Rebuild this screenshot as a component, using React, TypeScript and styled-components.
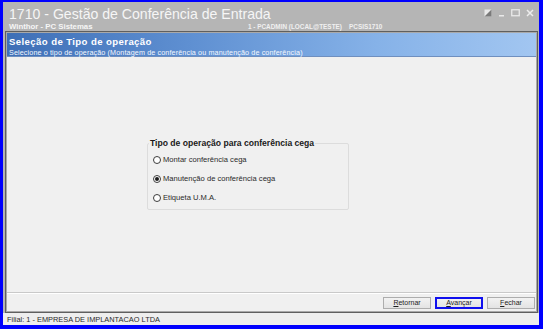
import React from 'react';
import styled, { createGlobalStyle } from 'styled-components';

const GlobalStyle = createGlobalStyle`
  html, body {
    margin: 0;
    padding: 0;
    background: #ffffff;
  }
  body {
    font-family: "Liberation Sans", Arial, sans-serif;
  }
`;

const Frame = styled.div`
  width: 543px;
  height: 329px;
  box-sizing: border-box;
  border-style: solid;
  border-color: #0000fe;
  border-width: 2px 4px 4px 3px;
  background: #b5b5b5;
  display: flex;
  flex-direction: column;
  overflow: hidden;
`;

const TitleBar = styled.div`
  height: 29px;
  flex: none;
  display: flex;
  justify-content: space-between;
  padding: 0 5px 0 6px;
  color: #f6f6f6;
`;

const TitleText = styled.div`
  display: flex;
  flex-direction: column;
`;

const AppTitle = styled.div`
  font-size: 14.1px;
  line-height: 17px;
  margin-top: 4px;
`;

const SubLine = styled.div`
  display: flex;
  align-items: baseline;
  font-size: 7px;
  line-height: 8px;
`;

const Company = styled.span`
  font-weight: bold;
  font-size: 7.8px;
  width: 239px;
`;

const Session = styled.span`
  font-weight: bold;
  font-size: 6.4px;
  color: #f0f0f0;
  white-space: pre;
`;

const Controls = styled.div`
  display: flex;
  gap: 6px;
  padding-top: 7px;
  align-items: flex-start;
`;

const Panel = styled.div`
  flex: 1;
  margin: 0 1px 0 2px;
  display: flex;
  flex-direction: column;
  border: 1px solid #5f5f5f;
  box-shadow: inset 0 0 0 1px #a9a9a9;
  padding: 1px;
  background: #f0f0f0;
`;

const Header = styled.div`
  height: 24px;
  flex: none;
  padding: 4px 0 0 2px;
  box-sizing: border-box;
  color: #ffffff;
  background: linear-gradient(to right, #3e6fb6 0%, #5f90d2 35%, #86b2e8 70%, #a2c6f1 100%);
  border-bottom: 1px solid #6f8fbf;
`;

const HeaderTitle = styled.div`
  font-weight: bold;
  font-size: 9.6px;
  line-height: 10px;
  letter-spacing: 0.4px;
`;

const HeaderHint = styled.div`
  font-size: 7.2px;
  line-height: 8px;
  margin-top: 2px;
  letter-spacing: 0.12px;
  color: #f4f8ff;
`;

const Content = styled.div`
  flex: 1;
  padding: 81px 0 0 140px;
  border-bottom: 1px solid #c9c9c9;
  box-shadow: 0 1px 0 #ffffff;
`;

const GroupBox = styled.fieldset`
  width: 202px;
  height: 72px;
  box-sizing: border-box;
  margin: 0;
  padding: 7px 0 0 5px;
  border: 1px solid #dcdcdc;
  border-radius: 2px;
  display: flex;
  flex-direction: column;
  gap: 10px;
`;

const GroupTitle = styled.legend`
  font-weight: bold;
  font-size: 8.6px;
  color: #1a1a1a;
  padding: 0 1px;
  margin-left: -4px;
`;

const Option = styled.label`
  display: flex;
  align-items: center;
  gap: 2px;
  font-size: 7.6px;
  line-height: 9px;
  color: #2a2a2a;
`;

const RadioDot = styled.span<{ $checked?: boolean }>`
  width: 8px;
  height: 8px;
  box-sizing: border-box;
  border-radius: 50%;
  border: 1px solid #3c3c3c;
  background: #ffffff;
  display: inline-flex;
  align-items: center;
  justify-content: center;
  &::after {
    content: '';
    width: 4px;
    height: 4px;
    border-radius: 50%;
    background: ${p => (p.$checked ? '#1a1a1a' : 'transparent')};
  }
`;

const ButtonRow = styled.div`
  height: 16px;
  flex: none;
  display: flex;
  justify-content: flex-end;
  align-items: center;
  gap: 4px;
  padding: 2px 1px 0 0;
`;

const Button = styled.button<{ $focused?: boolean }>`
  width: 48px;
  height: 12px;
  box-sizing: border-box;
  padding: 0;
  font-family: "Liberation Sans", Arial, sans-serif;
  font-size: 7px;
  line-height: 8px;
  color: #1c1c1c;
  background: linear-gradient(#f2f2f2, #e3e3e3);
  border: ${p => (p.$focused ? '2px solid #1010ee' : '1px solid #adadad')};
  border-radius: 0;
  & u {
    text-decoration: underline;
  }
`;

const StatusBar = styled.div`
  height: 12px;
  flex: none;
  background: #eeeeee;
  padding-left: 4px;
  font-size: 7.4px;
  line-height: 13px;
  color: #2a2a2a;
`;

const RestoreIcon = () => (
  <svg width="8" height="8" viewBox="0 0 8 8">
    <rect x="0.5" y="0.5" width="7" height="7" fill="#e9e9e9" />
    <polygon points="0.5,7.5 7.5,0.5 7.5,7.5" fill="#7a7a7a" />
  </svg>
);

const MinimizeIcon = () => (
  <svg width="7" height="8" viewBox="0 0 7 8">
    <rect x="1" y="6" width="5" height="1.5" fill="#e9e9e9" />
  </svg>
);

const MaximizeIcon = () => (
  <svg width="9" height="8" viewBox="0 0 9 8">
    <rect x="0.75" y="0.75" width="7.5" height="6" fill="none" stroke="#e9e9e9" strokeWidth="1.3" />
  </svg>
);

const CloseIcon = () => (
  <svg width="8" height="8" viewBox="0 0 8 8">
    <path d="M1 1 L7 7 M7 1 L1 7" stroke="#ededed" strokeWidth="1.5" />
  </svg>
);

const options = [
  { label: 'Montar conferência cega', checked: false },
  { label: 'Manutenção de conferência cega', checked: true },
  { label: 'Etiqueta U.M.A.', checked: false },
];

function App() {
  return (
    <>
      <GlobalStyle />
      <Frame>
        <TitleBar>
          <TitleText>
            <AppTitle>1710 - Gestão de Conferência de Entrada</AppTitle>
            <SubLine>
              <Company>Winthor - PC Sistemas</Company>
              <Session>{'1 - PCADMIN (LOCAL@TESTE)    PCSIS1710'}</Session>
            </SubLine>
          </TitleText>
          <Controls>
            <RestoreIcon />
            <MinimizeIcon />
            <MaximizeIcon />
            <CloseIcon />
          </Controls>
        </TitleBar>
        <Panel>
          <Header>
            <HeaderTitle>Seleção de Tipo de operação</HeaderTitle>
            <HeaderHint>
              Selecione o tipo de operação (Montagem de conferência ou manutenção de conferência)
            </HeaderHint>
          </Header>
          <Content>
            <GroupBox>
              <GroupTitle>Tipo de operação para conferência cega</GroupTitle>
              {options.map(o => (
                <Option key={o.label}>
                  <RadioDot $checked={o.checked} />
                  {o.label}
                </Option>
              ))}
            </GroupBox>
          </Content>
          <ButtonRow>
            <Button><u>R</u>etornar</Button>
            <Button $focused><u>A</u>vançar</Button>
            <Button><u>F</u>echar</Button>
          </ButtonRow>
        </Panel>
        <StatusBar>Filial: 1 - EMPRESA DE IMPLANTACAO LTDA</StatusBar>
      </Frame>
    </>
  );
}

export default App;
